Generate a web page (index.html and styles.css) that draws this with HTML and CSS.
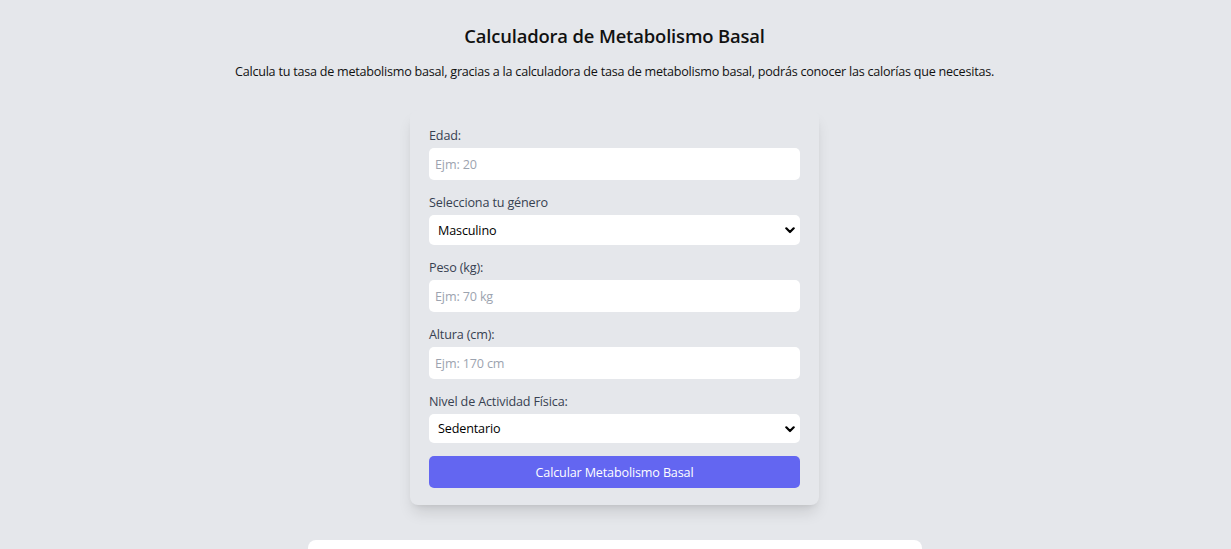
FILE: index.html
```html
<!DOCTYPE html>
<html lang="es">
<head>
<meta charset="utf-8">
<title>Calculadora de Metabolismo Basal</title>
<link rel="stylesheet" href="styles.css">
</head>
<body>
<main class="page">
  <header class="intro">
    <h1 class="title">Calculadora de Metabolismo Basal</h1>
    <p class="lead">Calcula tu tasa de metabolismo basal, gracias a la calculadora de tasa de metabolismo basal, podrás conocer las calorías que necesitas.</p>
  </header>

  <form class="card">
    <div class="field">
      <label class="label" for="edad">Edad:</label>
      <input class="input" id="edad" type="number" placeholder="Ejm: 20">
    </div>
    <div class="field">
      <label class="label" for="genero">Selecciona tu género</label>
      <div class="select-wrap">
        <select class="select" id="genero">
          <option>Masculino</option>
          <option>Femenino</option>
        </select>
        <svg class="chev" width="10" height="7" viewBox="0 0 10 7"><path d="M1.3 1.3 L5 5 L8.7 1.3" fill="none" stroke="#000" stroke-width="2.2" stroke-linecap="round" stroke-linejoin="round"/></svg>
      </div>
    </div>
    <div class="field">
      <label class="label" for="peso">Peso (kg):</label>
      <input class="input" id="peso" type="number" placeholder="Ejm: 70 kg">
    </div>
    <div class="field">
      <label class="label" for="altura">Altura (cm):</label>
      <input class="input" id="altura" type="number" placeholder="Ejm: 170 cm">
    </div>
    <div class="field">
      <label class="label" for="actividad">Nivel de Actividad Física:</label>
      <div class="select-wrap">
        <select class="select select-sm" id="actividad">
          <option>Sedentario</option>
          <option>Ligero</option>
          <option>Moderado</option>
          <option>Intenso</option>
        </select>
        <svg class="chev" width="10" height="7" viewBox="0 0 10 7"><path d="M1.3 1.3 L5 5 L8.7 1.3" fill="none" stroke="#000" stroke-width="2.2" stroke-linecap="round" stroke-linejoin="round"/></svg>
      </div>
    </div>
    <button class="btn" type="button">Calcular Metabolismo Basal</button>
  </form>

  <section class="result"></section>
</main>
</body>
</html>
```
FILE: styles.css
```css
* { box-sizing: border-box; }
html, body { margin: 0; padding: 0; }
body {
  background: #e5e7eb;
  font-family: "Open Sans", "Noto Sans", sans-serif;
  color: #111827;
  overflow: hidden;
  height: 549px;
}
.page {
  display: flex;
  flex-direction: column;
  align-items: center;
  padding-top: 22px;
  padding-right: 2px;
}
.intro { text-align: center; }
.title {
  margin: 0;
  font-size: 18.4px;
  font-weight: 600;
  line-height: 28px;
  color: #111;
  letter-spacing: -0.15px;
}
.lead {
  margin: 12px 0 0;
  font-size: 12.6px;
  line-height: 20px;
  color: #111;
  letter-spacing: -0.24px;
}
.card {
  margin-top: 28px;
  width: 409px;
  background: #e5e7eb;
  border-radius: 8px;
  padding: 16px 19px 17px;
  box-shadow: 0 10px 15px -3px rgba(0,0,0,0.12), 0 4px 6px -4px rgba(0,0,0,0.1);
  display: flex;
  flex-direction: column;
}
.field { display: flex; flex-direction: column; margin-bottom: 13px; }
.label {
  font-size: 12.6px;
  line-height: 20px;
  color: #374151;
  margin-bottom: 2px;
  letter-spacing: -0.15px;
}
.input, .select {
  width: 100%;
  height: 32px;
  border: none;
  border-radius: 5px;
  background: #fff;
  font-family: inherit;
  font-size: 12.6px;
  letter-spacing: -0.15px;
  padding: 0 6px;
  outline: none;
  color: #111;
  -moz-appearance: textfield;
}
.input::placeholder { color: #9ca3af; }
.input::-webkit-outer-spin-button,
.input::-webkit-inner-spin-button { -webkit-appearance: none; margin: 0; }
.select {
  height: 30px;
  appearance: none;
  -webkit-appearance: none;
  padding: 0 9px;
  color: #000;
}
.select-sm { height: 29px; }
.select-wrap { position: relative; }
.chev { position: absolute; right: 5px; top: 50%; margin-top: -3px; pointer-events: none; }
.btn {
  height: 32px;
  border: none;
  border-radius: 5px;
  background: #6366f1;
  color: #fff;
  font-family: inherit;
  font-size: 12.6px;
  letter-spacing: -0.15px;
}
.result {
  margin-top: 35px;
  width: 614px;
  height: 60px;
  background: #fff;
  border-radius: 8px 8px 0 0;
}
```
